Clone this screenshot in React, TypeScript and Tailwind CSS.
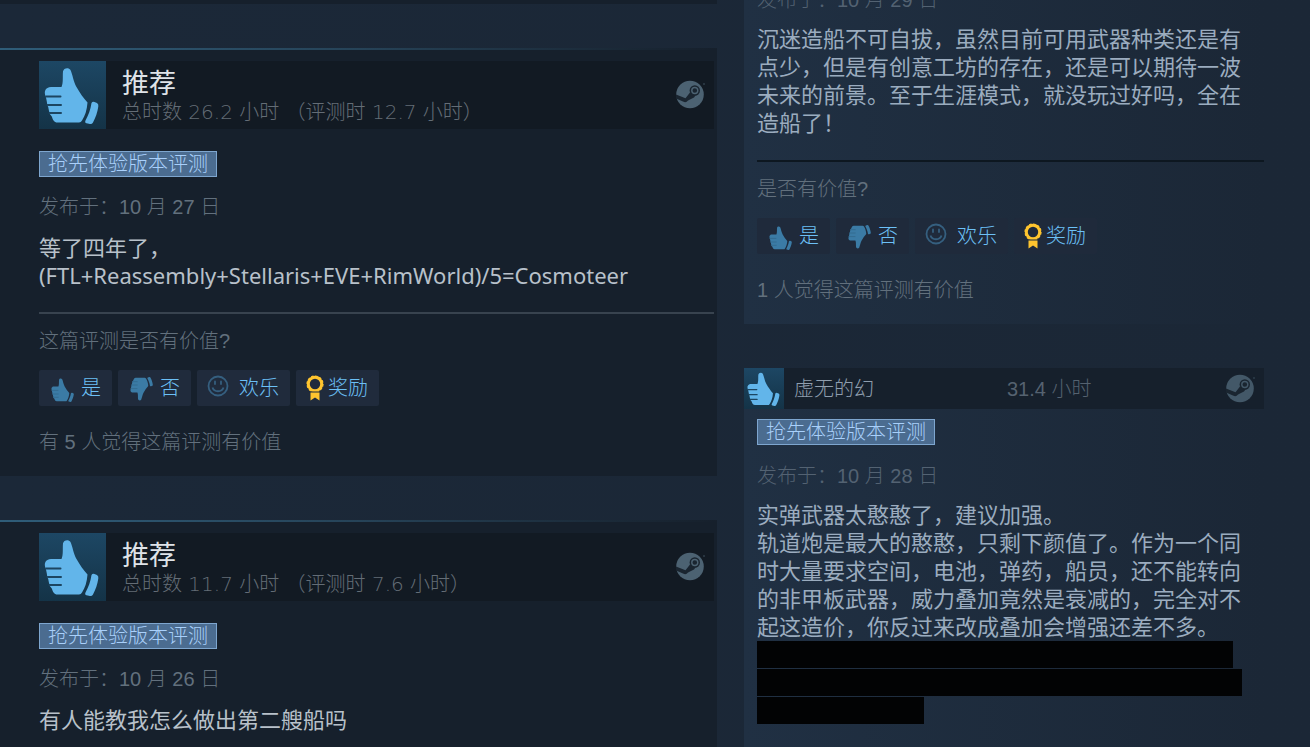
import type { ReactNode } from "react";

const SANS = "font-['Liberation_Sans','Noto_Sans_CJK_SC',sans-serif]";
const HUMANIST = "font-['Noto_Sans','Noto_Sans_CJK_SC',sans-serif]";
const WIDE = "font-['DejaVu_Sans','Noto_Sans_CJK_SC',sans-serif]";

function Thumb({ className, notch }: { className: string; notch: string }) {
  return (
    <svg viewBox="0 0 67 67" className={className} aria-hidden="true">
      <g fill="currentColor">
        <path d="M24 9.500C24.500 6 29.500 5 31.500 8C33.500 12 34.500 20 37.500 25C40.500 30.500 44.500 36 48.500 40.500C48 48 46 54 43 58.500Q42 60.500 40 60.500H18.500C15 60.500 14 58 12.800 54.500Q10.500 53 10 49L9.200 45Q8 43 7.800 39.500L7 35.500C6 33 5.500 31 6 29C7 26 9.500 25 12 25H22.500C24.500 21 23.500 14 24 9.500Z" />
        <path d="M52.500 41Q53.500 39.300 55.500 40L58 41Q59.800 42 59.300 44.500C58.500 50.500 56.500 55.500 54 60.500Q53 62.300 51 62L47.500 61.300Q45.500 60.800 46.500 58.500C49.500 53 51.500 47.500 52.500 41Z" />
      </g>
      <g stroke={notch} strokeWidth="2" strokeLinecap="round">
        <path d="M7 34.500H21.500M8.500 43H22M10.500 51H22" />
      </g>
    </svg>
  );
}

function SteamMark({ className }: { className: string }) {
  return (
    <svg viewBox="0 0 30 30" className={`size-[30px] shrink-0 ${className}`} role="img" aria-label="Steam">
      <circle cx="14" cy="14.500" r="13.800" fill="currentColor" />
      <path d="M0 14.500L9.500 18.300L14 12.500L21 13.500L18 17.500L12 20.500Q10 23.500 7 21.500L0 18.500Z" fill="#1a2530" />
      <circle cx="18.800" cy="10.500" r="5.200" fill="#1a2530" />
      <circle cx="18.800" cy="10.500" r="3" fill="none" stroke="currentColor" strokeWidth="1.400" />
      <circle cx="28" cy="4" r="1" fill="currentColor" opacity="0.500" />
    </svg>
  );
}

function Smiley() {
  return (
    <svg viewBox="0 0 22 22" className="mb-1 size-[22px] text-[#355f7f]" fill="none" stroke="currentColor" strokeWidth="1.800" aria-hidden="true">
      <circle cx="11" cy="11" r="9.500" />
      <path d="M5.500 12.500C7 17.500 15 17.500 16.500 12.500" />
      <path d="M8 6.500V9M14 6.500V9" strokeLinecap="round" />
    </svg>
  );
}

function Ribbon() {
  return (
    <svg viewBox="0 0 18 26" className="h-[26px] w-[18px]" aria-hidden="true">
      <path d="M4.500 16.500H13.500V25.500L9 22.500L4.500 25.500Z" fill="#ffc52f" />
      <circle cx="9" cy="9" r="6.700" fill="none" stroke="#ffc52f" strokeWidth="3" />
      <circle cx="9" cy="9" r="8" fill="none" stroke="#ffc52f" strokeWidth="1.200" strokeDasharray="2.500 1.690" />
      <path d="M3.500 17H14.500" stroke="#1d2a3a" strokeWidth="1" />
    </svg>
  );
}

function Vote({ icon, children, layout }: { icon: ReactNode; children: ReactNode; layout: string }) {
  return (
    <button
      type="button"
      className={`flex h-9 items-center rounded-xs pr-[11px] pl-2.5 text-xl leading-7 font-light text-[#6cc0f6] ${layout}`}
    >
      {icon}
      <span>{children}</span>
    </button>
  );
}

function Votes({ surface }: { surface: string }) {
  return (
    <div className="mt-[15px] flex gap-1.5">
      <Vote layout={`gap-1 ${surface}`} icon={<Thumb className="mt-1 size-7 text-[#3b7ba5]" notch="#33698d" />}>是</Vote>
      <Vote layout={`gap-1 ${surface}`} icon={<Thumb className="mt-0.5 size-7 -scale-y-100 text-[#3b7ba5]" notch="#33698d" />}>否</Vote>
      <Vote layout={`gap-2.5 ${surface}`} icon={<Smiley />}>欢乐</Vote>
      <Vote layout={`gap-1 ${surface}`} icon={<Ribbon />}>奖励</Vote>
    </div>
  );
}

function EarlyAccess({ className }: { className: string }) {
  return (
    <div className={className}>
      <span className="inline-flex h-[26px] items-center border border-[#7ea6cf] bg-[#4b6c90] px-2 text-xl leading-6 font-light text-[#a9d0fb]">
        抢先体验版本评测
      </span>
    </div>
  );
}

function ReviewCard({ hours, date, children }: { hours: string; date: string; children: ReactNode }) {
  return (
    <article className="bg-[#16202c] pb-5">
      <div className="h-0.5 bg-linear-to-r from-[#2f5d79] via-[#264358] to-[#16202c]" />
      <header className="mt-[11px] mr-[3px] ml-[39px] flex h-[68px] items-center bg-[#121a23]">
        <div className="flex h-[68px] w-[67px] shrink-0 items-center justify-center bg-linear-to-b from-[#1d4764] to-[#143347] text-[#62b5ea]">
          <Thumb className="size-[67px]" notch="#1c4561" />
        </div>
        <div className="ml-4 flex-1 pt-0.5">
          <h2 className="text-[27px] leading-8 text-[#dfe3e8]">推荐</h2>
          <p className={`text-xl leading-6 font-light text-[#646d76] ${WIDE}`}>{hours}</p>
        </div>
        <div className="pr-2">
          <SteamMark className="text-[#4c6272]" />
        </div>
      </header>
      <div className="pr-[3px] pl-[39px]">
        <EarlyAccess className="mt-[22px] flex" />
        <p className="mt-4 text-xl leading-7 font-light text-[#62707d]">{date}</p>
        {children}
      </div>
    </article>
  );
}

function Feedback({ question, count, divider, surface }: { question: string; count: string; divider: string; surface: string }) {
  return (
    <>
      <hr className={`border-t-2 ${divider}`} />
      <p className="mt-[13px] text-xl leading-7 font-light text-[#62707d]">{question}</p>
      <Votes surface={surface} />
      <p className="mt-[22px] text-xl leading-7 font-light text-[#62707d]">{count}</p>
    </>
  );
}

export default function App() {
  return (
    <main className={`grid h-screen grid-cols-[717fr_520fr] gap-x-[27px] overflow-hidden bg-linear-to-r from-[#1b2838] to-[#1b2736] pr-[46px] ${SANS}`}>
      <section className="flex flex-col gap-11">
        <div className="h-1 shrink-0 bg-[#16202c]" />
        <ReviewCard hours="总时数 26.2 小时 （评测时 12.7 小时）" date="发布于：10 月 27 日">
          <p className={`mt-3 text-[22px] leading-7 text-[#b8c1ca] ${HUMANIST}`}>
            等了四年了，
            <br />
            (FTL+Reassembly+Stellaris+EVE+RimWorld)/5=Cosmoteer
          </p>
          <Feedback
            question="这篇评测是否有价值?"
            count="有 5 人觉得这篇评测有价值"
            divider="mt-[23px] border-[#38434f]"
            surface="bg-[#202b3c]"
          />
        </ReviewCard>
        <ReviewCard hours="总时数 11.7 小时 （评测时 7.6 小时）" date="发布于：10 月 26 日">
          <p className={`mt-3 text-[22px] leading-7 text-[#b8c1ca] ${HUMANIST}`}>有人能教我怎么做出第二艘船吗</p>
        </ReviewCard>
      </section>

      <section className="-mt-3.5 flex flex-col gap-11">
        <article className="bg-linear-to-r from-[#203043] to-[#1b2736] pb-5 pl-[13px]">
          <p className="text-xl leading-7 font-light text-[#536272]">发布于：10 月 29 日</p>
          <p className="mt-3 pr-[22px] text-[22px] leading-7 text-[#9bacbf]">
            沉迷造船不可自拔，虽然目前可用武器种类还是有点少，但是有创意工坊的存在，还是可以期待一波未来的前景。至于生涯模式，就没玩过好吗，全在造船了！
          </p>
          <Feedback
            question="是否有价值?"
            count="1 人觉得这篇评测有价值"
            divider="mt-[22px] border-[#0d1720]"
            surface="bg-[#1f2a3b]"
          />
        </article>

        <article className="flex-1 bg-linear-to-r from-[#203043] to-[#1b2736] pb-5">
          <header className="flex h-[41px] items-center bg-[#16202c] text-xl leading-7 font-light">
            <div className="flex h-[41px] w-10 shrink-0 items-center justify-center bg-linear-to-b from-[#1d4764] to-[#143347] text-[#62b5ea]">
              <Thumb className="size-10" notch="#1c4561" />
            </div>
            <a href="#author" className="ml-2.5 w-[213px] text-[#8f9eae]">虚无的幻</a>
            <span className="flex-1 text-[#556270]">31.4 小时</span>
            <div className="pr-2">
              <SteamMark className="text-[#435868]" />
            </div>
          </header>
          <div className="pl-[13px]">
            <EarlyAccess className="mt-2.5 flex" />
            <p className="mt-[17px] text-xl leading-7 font-light text-[#536272]">发布于：10 月 28 日</p>
            <p className="mt-3 pr-[22px] text-[22px] leading-7 text-[#9bacbf]">
              实弹武器太憨憨了，建议加强。
              <br />
              轨道炮是最大的憨憨，只剩下颜值了。作为一个同时大量要求空间，电池，弹药，船员，还不能转向的非甲板武器，威力叠加竟然是衰减的，完全对不起这造价，你反过来改成叠加会增强还差不多。
            </p>
            <div className="-mt-px flex flex-col gap-px">
              <div className="h-[27px] w-[476px] max-w-full bg-[#020304]" />
              <div className="h-[27px] w-[485px] max-w-full bg-[#020304]" />
              <div className="h-[27px] w-[167px] max-w-full bg-[#020304]" />
            </div>
          </div>
        </article>
      </section>
    </main>
  );
}
